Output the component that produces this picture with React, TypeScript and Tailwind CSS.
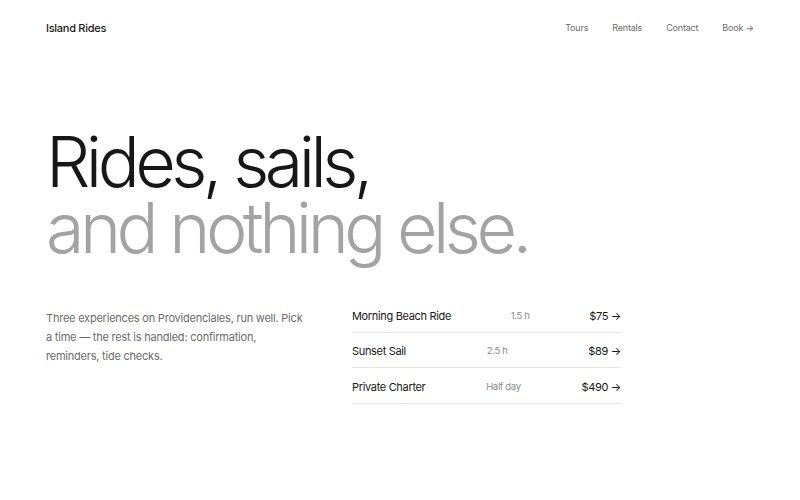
export default function App() {
  const rides = [
    { name: "Morning Beach Ride", time: "1.5 h", price: "$75" },
    { name: "Sunset Sail", time: "2.5 h", price: "$89" },
    { name: "Private Charter", time: "Half day", price: "$490" },
  ];

  return (
    <div
      className="min-h-[500px] w-full bg-white px-[46px] text-[#171717]"
      style={{ fontFamily: "Inter, 'Noto Sans', sans-serif" }}
    >
      <header className="flex h-[56px] items-center justify-between">
        <span className="text-[11px] font-medium tracking-tight">Island Rides</span>
        <nav className="flex items-center gap-[24px] text-[9px] tracking-[-0.02em] text-[#6b6b6b]">
          <a>Tours</a>
          <a>Rentals</a>
          <a>Contact</a>
          <a>Book →</a>
        </nav>
      </header>

      <h1 className="mt-[73px] text-[70px] font-light leading-[66px] tracking-[-0.065em]">
        <span className="block">Rides, sails,</span>
        <span className="block text-[#a3a3a3]">and nothing else.</span>
      </h1>

      <section className="mt-[36px] flex items-start">
        <p className="w-[306px] flex-none pr-[46px] pt-[12px] text-[11px] leading-[19px] tracking-[-0.02em] text-[#6b6b6b]">
          Three experiences on Providenciales, run well. Pick a time — the rest is handled:
          confirmation, reminders, tide checks.
        </p>
        <ul className="w-[269px]">
          {rides.map((r) => (
            <li
              key={r.name}
              className="flex h-[35.5px] items-center justify-between border-b border-[#e5e5e5] pt-[3px] text-[11px] tracking-[-0.03em]"
            >
              <span>{r.name}</span>
              <span className="text-[9.5px] text-[#8a8a8a]">{r.time}</span>
              <span>{r.price} →</span>
            </li>
          ))}
        </ul>
      </section>
    </div>
  );
}
